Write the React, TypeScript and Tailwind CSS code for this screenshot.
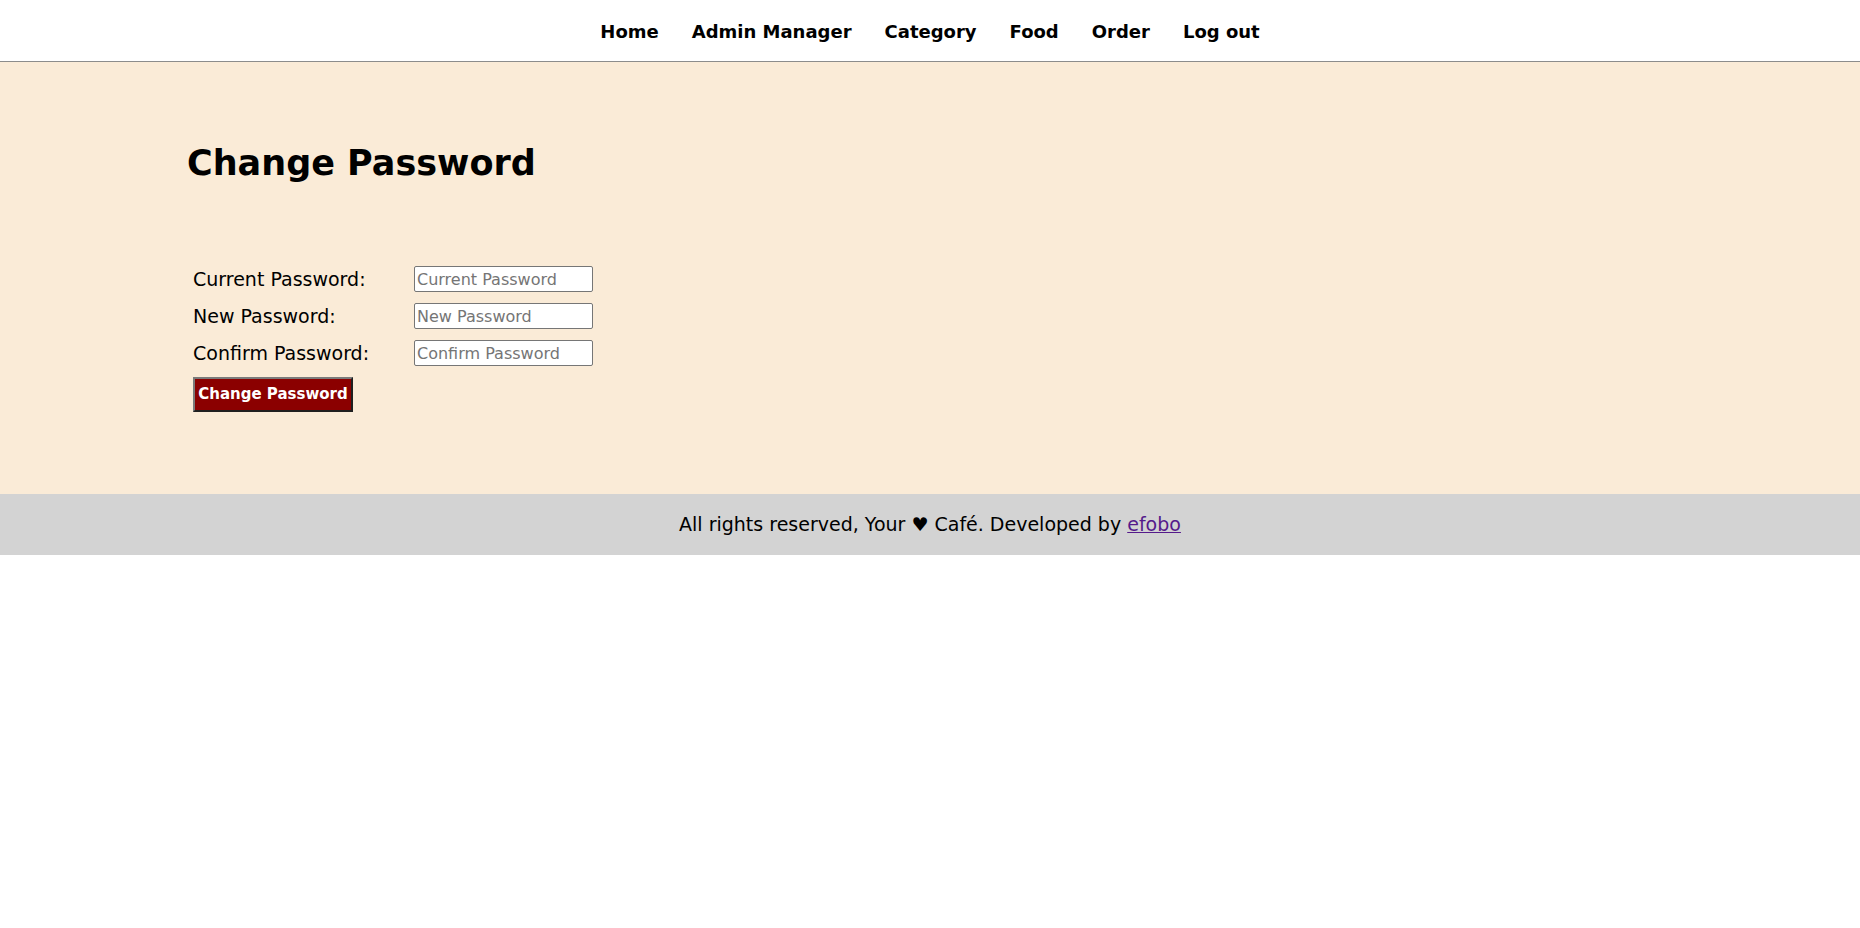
import React from 'react';

const font = { fontFamily: '"DejaVu Sans", "Liberation Sans", sans-serif' };

const navItems = ['Home', 'Admin Manager', 'Category', 'Food', 'Order', 'Log out'];

const fields = [
  { label: 'Current Password:', placeholder: 'Current Password' },
  { label: 'New Password:', placeholder: 'New Password' },
  { label: 'Confirm Password:', placeholder: 'Confirm Password' },
];

const App: React.FC = () => {
  return (
    <div className="min-h-[928px] bg-white text-black" style={font}>
      {/* top menu */}
      <nav className="h-[62px] border-b border-[#8c8c8c] bg-white">
        <ul className="flex h-full items-center justify-center gap-[33px] pt-[2px] text-[18px] font-bold">
          {navItems.map((item) => (
            <li key={item}>
              <a href="#" className="text-black">{item}</a>
            </li>
          ))}
        </ul>
      </nav>

      {/* main content */}
      <main className="bg-[#faebd7] pb-[82px] pl-[187px] pt-[73px]">
        <h1 className="text-[35px] font-bold leading-[56px]">Change Password</h1>

        <form className="mt-[75px] pl-[6px]">
          <div className="grid grid-cols-[221px_auto] gap-y-[11px]">
            {fields.map((f) => (
              <React.Fragment key={f.label}>
                <label className="flex items-center text-[19px] leading-[26px]">{f.label}</label>
                <input
                  type="password"
                  placeholder={f.placeholder}
                  className="h-[26px] w-[179px] rounded-[2px] border border-[#767676] bg-white px-[2px] text-[16px] placeholder:text-[#757575]"
                  style={font}
                />
              </React.Fragment>
            ))}
          </div>
          <button
            type="submit"
            className="mt-[11px] h-[35px] w-[160px] border-2 border-t-[#7a7a7a] border-l-[#7a7a7a] border-b-[#1f1f1f] border-r-[#1f1f1f] bg-[#8b0000] text-[15px] font-bold text-white"
            style={font}
          >
            Change Password
          </button>
        </form>
      </main>

      {/* footer */}
      <footer className="flex h-[61px] items-center justify-center bg-[#d3d3d3] text-[19px]">
        <p>
          All rights reserved, Your ♥ Café. Developed by{' '}
          <a href="#" className="text-[#551a8b] underline">efobo</a>
        </p>
      </footer>
    </div>
  );
};

export default App;
